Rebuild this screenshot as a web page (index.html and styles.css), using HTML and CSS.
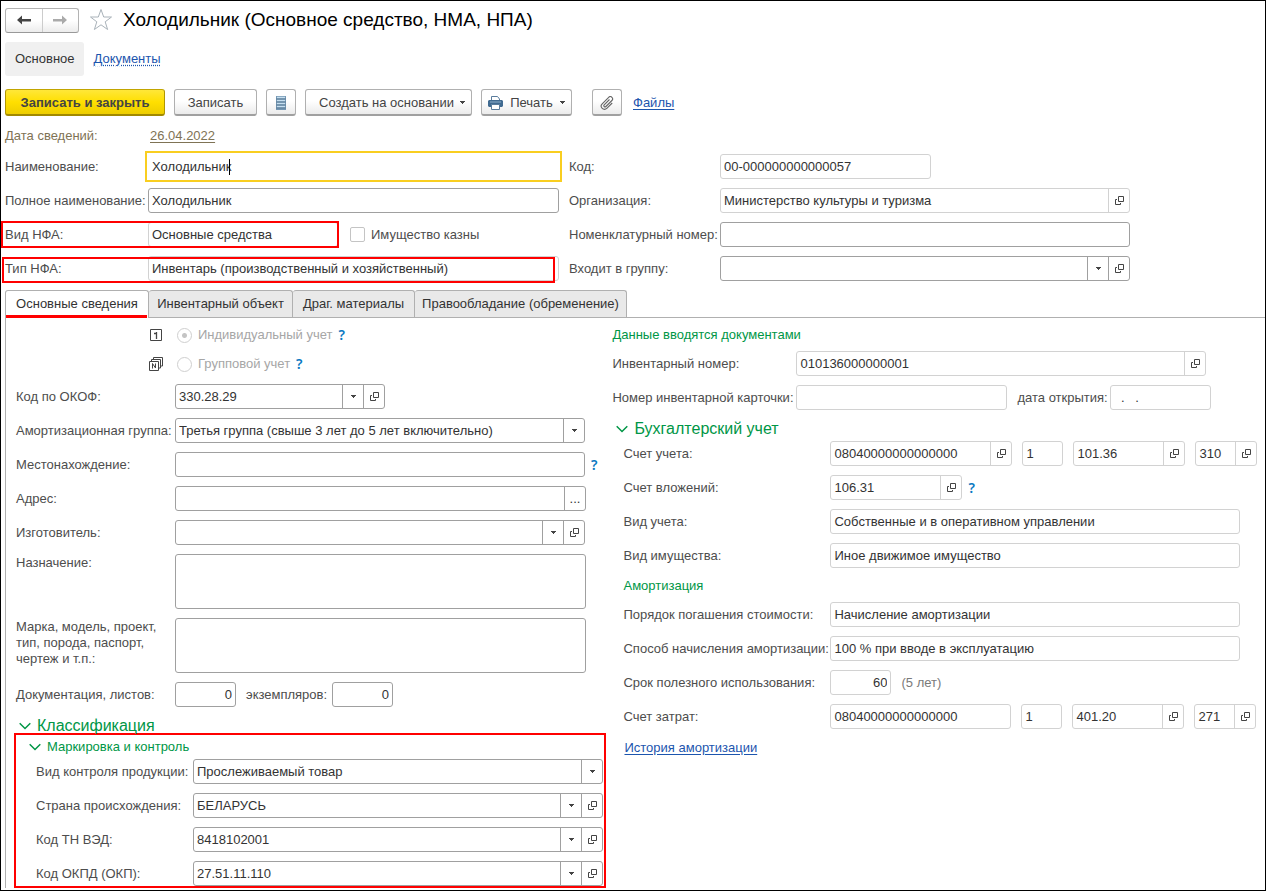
FILE: index.html
```html
<!DOCTYPE html>
<html lang="ru">
<head>
<meta charset="utf-8">
<title>Холодильник (Основное средство, НМА, НПА)</title>
<link rel="stylesheet" href="styles.css">
</head>
<body>
<svg class="sprite" aria-hidden="true">
  <symbol id="open" viewBox="0 0 10 10"><path d="M4.500.5h5v5h-5zM3 3.500H1.500v5h5V7" fill="none" stroke="#444"/></symbol>
  <symbol id="down" viewBox="0 0 5 3"><path d="M0 0h5v1H4v1H3v1H2V2H1V1H0z" fill="#444"/></symbol>
  <symbol id="chevron" viewBox="0 0 12 8"><path d="M.7 1.2 6 6.5l5.300-5.300" fill="none" stroke="#009646" stroke-width="1.500"/></symbol>
</svg>
<main class="window">
  <header class="titlebar">
    <div class="history">
      <button type="button" aria-label="Назад"><svg width="14" height="10" viewBox="0 0 14 10"><path d="M0 5l5-4.500V4h9v2.500H5v3z" fill="#444"/></svg></button>
      <button type="button" aria-label="Вперед"><svg width="14" height="10" viewBox="0 0 14 10"><path d="M14 5 9 .5V4H0v2.500h9v3z" fill="#aaa"/></svg></button>
    </div>
    <button class="star" type="button" aria-label="В избранное"><svg width="24" height="24" viewBox="0 0 24 24"><path d="M12 1.500l2.700 7.500h7.800l-6.300 4.800 2.400 7.700-6.600-4.700-6.600 4.700 2.400-7.700L1.500 9h7.800z" fill="#fff" stroke="#a9b2b9"/></svg></button>
    <h1>Холодильник (Основное средство, НМА, НПА)</h1>
  </header>

  <nav class="sections">
    <a class="current" href="#">Основное</a>
    <a class="dotted" href="#">Документы</a>
  </nav>

  <div class="toolbar">
    <button class="btn primary" type="button">Записать и закрыть</button>
    <button class="btn save" type="button">Записать</button>
    <button class="btn icon" type="button" aria-label="Список"><svg width="10" height="14" viewBox="0 0 10 14"><path d="M0 0h10v14H0z" fill="#7597b3"/><path d="M1 1.500h8M1 4.500h8M1 7.500h8M1 10.500h8" stroke="#c6dff0" stroke-width="1.500"/><path d="M0 3h10M0 6h10M0 9h10M0 12h10" stroke="#52748f" stroke-width=".7"/></svg></button>
    <button class="btn create" type="button">Создать на основании<svg width="5" height="3"><use href="#down"/></svg></button>
    <button class="btn print" type="button"><svg width="15" height="14" viewBox="0 0 15 14"><path d="M3.500 4V.5h6L11.500 3v1" fill="#fff" stroke="#5a7c9c"/><path d="M1 4h13l1 1v5l-1 1H1l-1-1V5z" fill="#416b91"/><path d="M2 6h11" stroke="#8fb0cb"/><path d="M3.500 8.500h8v5h-8z" fill="#fff" stroke="#5a7c9c"/></svg><span>Печать</span><svg width="5" height="3"><use href="#down"/></svg></button>
    <button class="btn icon clip" type="button" aria-label="Прикрепить"><svg width="14" height="14" viewBox="0 0 14 14"><path d="M9.500 3.500 4.200 8.800a1.200 1.200 0 0 0 1.700 1.700l6-6a2.200 2.200 0 0 0-3.200-3.200l-6.500 6.500a3.200 3.200 0 0 0 4.600 4.600l5.400-5.400" fill="none" stroke="#666" stroke-width="1.100"/></svg></button>
    <a class="link" href="#">Файлы</a>
  </div>

  <section class="summary">
    <div class="stack first">
      <div class="date"><span>Дата сведений:</span><a href="#">26.04.2022</a></div>
      <div class="row"><label for="name">Наименование:</label><div class="field active"><input id="name" value="Холодильник"><i class="caret"></i></div></div>
      <div class="row"><label for="full">Полное наименование:</label><div class="field"><input id="full" value="Холодильник"></div></div>
      <div class="row"><label for="kind">Вид НФА:</label><div class="field ro w190"><input id="kind" value="Основные средства" readonly></div><input class="check" id="treasury" type="checkbox" disabled><label class="after" for="treasury">Имущество казны</label><i class="mark mark-kind"></i></div>
      <div class="row"><label for="type">Тип НФА:</label><div class="field ro"><input id="type" value="Инвентарь (производственный и хозяйственный)" readonly></div><i class="mark mark-type"></i></div>
    </div>
    <div class="stack second">
      <div class="row"><label for="code">Код:</label><div class="field ro w211"><input id="code" value="00-000000000000057" readonly></div></div>
      <div class="row"><label for="org">Организация:</label><div class="field ro"><input id="org" value="Министерство культуры и туризма" readonly><button type="button" aria-label="Открыть"><svg width="10" height="10"><use href="#open"/></svg></button></div></div>
      <div class="row"><label for="nomen">Номенклатурный номер:</label><div class="field"><input id="nomen"></div></div>
      <div class="row"><label for="group">Входит в группу:</label><div class="field"><select id="group"><option></option></select><span class="cell"><svg width="5" height="3"><use href="#down"/></svg></span><button type="button" aria-label="Открыть"><svg width="10" height="10"><use href="#open"/></svg></button></div></div>
    </div>
  </section>

  <div class="tabs" role="tablist">
    <button class="selected" type="button" role="tab" aria-selected="true">Основные сведения</button>
    <button class="tab-object" type="button" role="tab">Инвентарный объект</button>
    <button class="tab-metals" type="button" role="tab">Драг. материалы</button>
    <button class="tab-rights" type="button" role="tab">Правообладание (обременение)</button>
  </div>

  <section class="panel">
    <div class="left">
      <div class="options">
        <div class="option"><svg width="14" height="13" viewBox="0 0 14 13"><path d="M1.500.5h11v11h-11z" fill="none" stroke="#444"/><path d="M5 4.500h2.500M7.500 3v7" fill="none" stroke="#444" stroke-width="1.300"/></svg><input id="single" type="radio" name="mode" checked disabled><label for="single">Индивидуальный учет</label><button class="help" type="button">?</button></div>
        <div class="option"><svg width="14" height="14" viewBox="0 0 14 14"><path d="M.5 4.500h9v9h-9zM2.500 4V2.500h9V11H10M4.500 2V.5h9V9H12M3.500 11.500v-5l3 4.500V6.500" fill="none" stroke="#444"/></svg><input id="multi" type="radio" name="mode" disabled><label for="multi">Групповой учет</label><button class="help" type="button">?</button></div>
      </div>
      <div class="stack main-fields">
        <div class="row"><label for="okof">Код по ОКОФ:</label><div class="field w210"><select id="okof"><option>330.28.29</option></select><span class="cell"><svg width="5" height="3"><use href="#down"/></svg></span><button type="button" aria-label="Открыть"><svg width="10" height="10"><use href="#open"/></svg></button></div></div>
        <div class="row"><label for="amort">Амортизационная группа:</label><div class="field"><select id="amort"><option>Третья группа (свыше 3 лет до 5 лет включительно)</option></select><span class="cell"><svg width="5" height="3"><use href="#down"/></svg></span></div></div>
        <div class="row"><label for="place">Местонахождение:</label><div class="field"><input id="place"></div><button class="help" type="button">?</button></div>
        <div class="row"><label for="addr">Адрес:</label><div class="field w411"><input id="addr"><button type="button" aria-label="Выбрать">...</button></div></div>
        <div class="row"><label for="maker">Изготовитель:</label><div class="field"><select id="maker"><option></option></select><span class="cell"><svg width="5" height="3"><use href="#down"/></svg></span><button type="button" aria-label="Открыть"><svg width="10" height="10"><use href="#open"/></svg></button></div></div>
        <div class="row tall"><label for="purpose">Назначение:</label><div class="field w411"><textarea id="purpose"></textarea></div></div>
        <div class="row tall"><label for="model">Марка, модель, проект, тип, порода, паспорт, чертеж и т.п.:</label><div class="field w411"><textarea id="model"></textarea></div></div>
        <div class="row"><label for="sheets">Документация, листов:</label><div class="field w61 num"><input id="sheets" value="0"></div><label class="mid" for="copies">экземпляров:</label><div class="field w61 num"><input id="copies" value="0"></div></div>
      </div>
      <h2 class="class-head"><svg width="12" height="8"><use href="#chevron"/></svg>Классификация</h2>
      <div class="marking">
        <h3><svg width="12" height="8"><use href="#chevron"/></svg>Маркировка и контроль</h3>
        <div class="stack">
          <div class="row"><label for="control">Вид контроля продукции:</label><div class="field"><select id="control"><option>Прослеживаемый товар</option></select><span class="cell"><svg width="5" height="3"><use href="#down"/></svg></span></div></div>
          <div class="row"><label for="country">Страна происхождения:</label><div class="field"><select id="country"><option>БЕЛАРУСЬ</option></select><span class="cell"><svg width="5" height="3"><use href="#down"/></svg></span><button type="button" aria-label="Открыть"><svg width="10" height="10"><use href="#open"/></svg></button></div></div>
          <div class="row"><label for="tnved">Код ТН ВЭД:</label><div class="field"><select id="tnved"><option>8418102001</option></select><span class="cell"><svg width="5" height="3"><use href="#down"/></svg></span><button type="button" aria-label="Открыть"><svg width="10" height="10"><use href="#open"/></svg></button></div></div>
          <div class="row"><label for="okpd">Код ОКПД (ОКП):</label><div class="field"><select id="okpd"><option>27.51.11.110</option></select><span class="cell"><svg width="5" height="3"><use href="#down"/></svg></span><button type="button" aria-label="Открыть"><svg width="10" height="10"><use href="#open"/></svg></button></div></div>
        </div>
      </div>
    </div>

    <div class="right">
      <h3 class="docs-head">Данные вводятся документами</h3>
      <div class="stack docs">
        <div class="row"><label for="inv">Инвентарный номер:</label><div class="field ro"><input id="inv" value="010136000000001" readonly><button type="button" aria-label="Открыть"><svg width="10" height="10"><use href="#open"/></svg></button></div></div>
        <div class="row"><label for="card">Номер инвентарной карточки:</label><div class="field ro w211"><input id="card" readonly></div><label class="mid" for="opened">дата открытия:</label><div class="field ro w101"><input id="opened" value="  .   ." readonly></div></div>
      </div>
      <h2 class="account-head"><svg width="12" height="8"><use href="#chevron"/></svg>Бухгалтерский учет</h2>
      <div class="stack account">
        <div class="row"><label for="acc">Счет учета:</label><div class="accounts">
          <div class="field ro w182"><input id="acc" value="08040000000000000" readonly><button type="button" aria-label="Открыть"><svg width="10" height="10"><use href="#open"/></svg></button></div>
          <div class="field ro w41"><input aria-label="КФО" value="1" readonly></div>
          <div class="field ro w112"><input aria-label="Счет" value="101.36" readonly><button type="button" aria-label="Открыть"><svg width="10" height="10"><use href="#open"/></svg></button></div>
          <div class="field ro w62"><input aria-label="КЭК" value="310" readonly><button type="button" aria-label="Открыть"><svg width="10" height="10"><use href="#open"/></svg></button></div></div></div>
        <div class="row"><label for="inves">Счет вложений:</label><div class="field ro w132"><input id="inves" value="106.31" readonly><button type="button" aria-label="Открыть"><svg width="10" height="10"><use href="#open"/></svg></button></div><button class="help" type="button">?</button></div>
        <div class="row"><label for="akind">Вид учета:</label><div class="field ro"><input id="akind" value="Собственные и в оперативном управлении" readonly></div></div>
        <div class="row"><label for="pkind">Вид имущества:</label><div class="field ro"><input id="pkind" value="Иное движимое имущество" readonly></div></div>
      </div>
      <h3 class="amort-head">Амортизация</h3>
      <div class="stack account">
        <div class="row"><label for="order">Порядок погашения стоимости:</label><div class="field ro"><input id="order" value="Начисление амортизации" readonly></div></div>
        <div class="row"><label for="method">Способ начисления амортизации:</label><div class="field ro"><input id="method" value="100 % при вводе в эксплуатацию" readonly></div></div>
        <div class="row"><label for="term">Срок полезного использования:</label><div class="field ro w61 num"><input id="term" value="60" readonly></div><span class="hint">(5 лет)</span></div>
        <div class="row"><label for="cost">Счет затрат:</label><div class="accounts">
          <div class="field ro w181"><input id="cost" value="08040000000000000" readonly></div>
          <div class="field ro w41"><input aria-label="КФО затрат" value="1" readonly></div>
          <div class="field ro w112"><input aria-label="Счет затрат" value="401.20" readonly><button type="button" aria-label="Открыть"><svg width="10" height="10"><use href="#open"/></svg></button></div>
          <div class="field ro w62"><input aria-label="КЭК затрат" value="271" readonly><button type="button" aria-label="Открыть"><svg width="10" height="10"><use href="#open"/></svg></button></div></div></div>
      </div>
      <a class="link amort-link" href="#">История амортизации</a>
    </div>
  </section>
</main>
</body>
</html>
```
FILE: styles.css
```css
* { box-sizing: border-box; }
body {
  margin: 0;
  font: 13px/16px "Liberation Sans", Arial, sans-serif;
  color: #4d4d4d;
  background: #fff;
}
button, input, select, textarea { font: inherit; color: inherit; margin: 0; padding: 0; }
button { border: 0; background: none; }
h1, h2, h3 { margin: 0; font-weight: normal; }
a { color: #1c55ae; }
svg { display: block; flex: none; }
.sprite { position: absolute; width: 0; height: 0; }

.window {
  min-height: 100vh;
  border: 1px solid #000;
  padding: 5px 0 2px 4px;
  display: flex;
  flex-direction: column;
}

/* Title and navigation */
.titlebar { display: flex; align-items: center; height: 28px; }
.history {
  display: flex;
  width: 74px;
  height: 25px;
  border: 1px solid #b3b3b3;
  border-bottom-color: #999;
  border-radius: 3px;
  background: linear-gradient(#fff 50%, #ececec);
}
.history button { flex: 1; display: flex; align-items: center; justify-content: center; }
.history button + button { border-left: 1px solid #ccc; }
.star { margin: 0 10px; }
h1 { font-size: 19px; line-height: 24px; color: #000; }
.sections { display: flex; align-items: center; gap: 10px; margin-top: 8px; }
.sections .current {
  padding: 9px 9px 9px 10px;
  border-radius: 3px;
  background: #f0f0f0;
  color: #333;
  text-decoration: none;
}
.sections .dotted { text-decoration: underline dotted; text-underline-offset: 2px; }

.toolbar { display: flex; align-items: center; gap: 9px; margin-top: 13px; }
.btn {
  height: 27px;
  display: flex;
  align-items: center;
  justify-content: center;
  padding-top: 1px;
  border: 1px solid #b0b0b0;
  border-bottom: 2px solid #a0a0a0;
  border-radius: 3px;
  background: linear-gradient(#fff 45%, #ebebeb);
  color: #444;
}
.btn.primary {
  width: 160px;
  border-color: #c2a500 #b09600 #a18900;
  background: linear-gradient(#ffe739, #ffdf00 50%, #edcd00);
  font-weight: bold;
}
.save { width: 83px; }
.icon { width: 30px; }
.create { width: 167px; gap: 6px; padding-left: 7px; }
.print { width: 91px; gap: 7px; }
.clip { margin-left: 11px; }
.link { margin-left: 2px; text-underline-offset: 2px; }

/* Rows and fields */
.stack { display: flex; flex-direction: column; gap: 9px; }
.row { display: flex; align-items: center; min-height: 25px; position: relative; }
.row > label:first-child { flex: none; width: var(--label); }
.field {
  flex: 0 1 410px;
  min-width: 0;
  height: 25px;
  display: flex;
  border: 1px solid #a0a0a0;
  border-radius: 3px;
  background: #fff;
  color: #333;
  position: relative;
}
.field.ro { border-color: #d2d2d2; }
.field input, .field select, .field textarea {
  flex: 1;
  width: 0;
  min-width: 0;
  border: 0;
  padding: 0 3px;
  outline: 0;
  background: none;
  appearance: none;
  resize: none;
}
.field > button, .cell {
  flex: none;
  width: 21px;
  display: flex;
  align-items: center;
  justify-content: center;
  border-left: 1px solid #a0a0a0;
}
.field.ro > button { border-color: #d2d2d2; }
.caret { position: absolute; left: 80px; top: 4px; width: 1px; height: 16px; background: #000; }
.num input { text-align: right; }
.field.w41 { flex-basis: 41px; }
.field.w61 { flex-basis: 61px; }
.field.w62 { flex-basis: 62px; }
.field.w101 { flex-basis: 101px; }
.field.w112 { flex-basis: 112px; }
.field.w132 { flex-basis: 132px; }
.field.w181 { flex-basis: 181px; }
.field.w182 { flex-basis: 182px; }
.field.w210 { flex-basis: 210px; }
.field.w211 { flex-basis: 211px; }
.field.w411, .first .field { flex-basis: 411px; }
.first .field.w190 { flex-basis: 190px; }
.field.active {
  border-color: transparent;
  border-radius: 0;
  outline: 2px solid #f9ce20;
  outline-offset: 1px;
}
.accounts { display: flex; flex: 1; gap: 10px; min-width: 0; }
.mid { margin: 0 5px 0 10px; white-space: nowrap; }
.docs .mid { margin-right: 2px; }
.help {
  padding-left: 6px;
  color: #0a78c2;
  font-family: "Noto Sans", sans-serif;
  font-size: 14px;
  font-weight: 600;
}

/* Summary above the tabs */
.summary { display: grid; grid-template-columns: 554fr 696fr; gap: 10px; margin-top: 12px; align-items: end; }
.summary .first { --label: 143px; }
.summary .second { --label: 151px; }
.date { display: flex; margin-bottom: 1px; color: #7f7355; }
.date span { width: 145px; }
.date a { color: inherit; text-underline-offset: 2px; }
.check {
  appearance: none;
  width: 15px;
  height: 15px;
  margin: 0 6px 0 12px;
  border: 1px solid #c4c4c4;
  border-radius: 2px;
}
.row .check { margin: 0 6px 0 12px; }
.mark { position: absolute; border: 2px solid #f00; pointer-events: none; }
.mark-kind { left: -4px; top: -1px; width: 338px; height: 27px; }
.mark-type { left: -3px; top: 1px; width: 553px; height: 26px; }

/* Tabs */
.tabs { display: flex; margin-top: 9px; border-bottom: 1px solid #b0b0b0; }
.tabs button {
  height: 27px;
  border: 1px solid #b0b0b0;
  border-width: 1px 1px 0 0;
  border-radius: 3px 3px 0 0;
  background: #e9e9e9;
  color: #333;
  white-space: nowrap;
}
.tabs .selected {
  width: 144px;
  height: 28px;
  margin-bottom: -1px;
  padding-bottom: 1px;
  border-left-width: 1px;
  background: linear-gradient(#f00, #f00) bottom left / 141px 3px no-repeat #fff;
}
.tabs .tab-object { width: 144px; }
.tabs .tab-metals { width: 122px; }
.tabs .tab-rights { width: 212px; }

/* Tab contents */
.panel {
  flex: 1;
  display: grid;
  grid-template-columns: 596fr 652fr;
  border-left: 1px solid #b0b0b0;
  padding-left: 10px;
}
.left { padding-top: 9px; }
.options { display: flex; flex-direction: column; gap: 13px; margin: 0 0 12px 133px; }
.option { display: flex; align-items: center; height: 16px; color: #a6a6a6; }
.option input {
  appearance: none;
  width: 15px;
  height: 15px;
  margin: 0 6px 0 14px;
  border: 1px solid #cfcfcf;
  border-radius: 50%;
}
.option input:checked { background: radial-gradient(circle, #c4c4c4 2px, #fff 3px); }
.main-fields { --label: 159px; }
.tall { align-items: flex-start; }
.tall .field { height: 55px; }
.tall label { padding: 1px 12px 0 0; }
h2 { display: flex; align-items: center; gap: 6px; font-size: 16px; line-height: 20px; color: #009646; }
h3 { display: flex; align-items: center; gap: 6px; font-size: 13px; line-height: 16px; color: #009646; }
.class-head { margin: 12px 0 0 3px; height: 14px; }
.marking {
  --label: 157px;
  margin: 0 6px 0 -2px;
  padding: 4px 1px 0 20px;
  border: 2px solid #f00;
}
.marking h3 { margin: 0 0 4px -7px; }
.right { padding-top: 9px; }
.docs { --label: 184px; margin-top: 8px; }
.account-head { margin: 9px 0 2px 4px; }
.account { --label: 207px; margin-left: 11px; }
.amort-head { margin: 10px 0 8px 11px; }
.hint { margin-left: 10px; color: #7a7a7a; }
.amort-link { display: inline-block; margin: 11px 0 0 12px; }
```
